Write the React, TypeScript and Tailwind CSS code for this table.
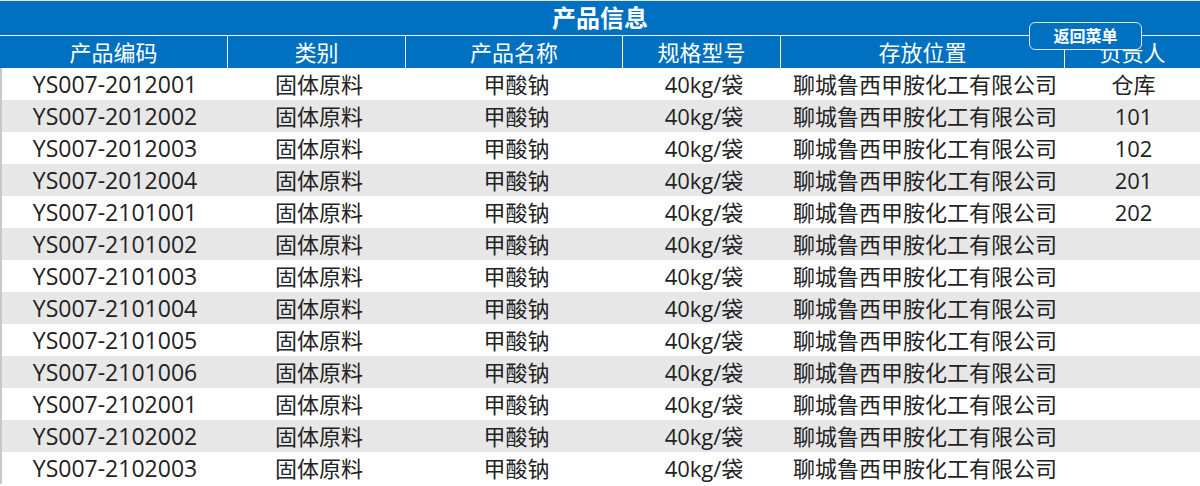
const codes = [
  "YS007-2012001",
  "YS007-2012002",
  "YS007-2012003",
  "YS007-2012004",
  "YS007-2101001",
  "YS007-2101002",
  "YS007-2101003",
  "YS007-2101004",
  "YS007-2101005",
  "YS007-2101006",
  "YS007-2102001",
  "YS007-2102002",
  "YS007-2102003",
];

const owners = ["仓库", "101", "102", "201", "202"];

const headers = ["产品编码", "类别", "产品名称", "规格型号", "存放位置", "负责人"];

const cols = "grid grid-cols-[228px_178px_217px_158px_284px_1fr]";

export default function App() {
  return (
    <div
      className="relative h-[486px] w-[1200px] overflow-hidden bg-white text-[#222]"
      style={{ fontFamily: '"Open Sans", "Noto Sans CJK SC", sans-serif' }}
    >
      <div className="flex h-[35px] items-center justify-center border-t border-[#dfe6ee] bg-[#0070c0] text-[24px] font-bold leading-none text-white">
        产品信息
      </div>
      <div className={`${cols} h-[33px] border-t border-white bg-[#0070c0] text-[22px] text-white`}>
        {headers.map((h, i) => (
          <div
            key={h}
            className={`flex items-center justify-center leading-none ${i < 5 ? "border-r border-white" : ""}`}
          >
            {h}
          </div>
        ))}
      </div>
      <div className="border-l-2 border-[#c8c8c8]">
        {codes.map((code, i) => (
          <div
            key={code}
            className={`${cols} h-[32px] text-[22px] leading-none ${i % 2 === 1 ? "bg-[#e7e7e7]" : "bg-white"}`}
          >
            <div className="flex items-center justify-center pr-[2px] text-[23px]">{code}</div>
            <div className="flex items-center justify-center">固体原料</div>
            <div className="flex items-center justify-center">甲酸钠</div>
            <div className="flex items-center justify-center">40kg/袋</div>
            <div className="flex items-center justify-center">聊城鲁西甲胺化工有限公司</div>
            <div className="flex items-center justify-center">{owners[i] ?? ""}</div>
          </div>
        ))}
      </div>
      <button className="absolute left-[1029px] top-[22px] flex h-[28px] w-[113px] items-center justify-center rounded-[6px] border-[1.5px] border-[#dbe9f6] bg-[#0070c0] text-[16px] font-bold text-white">
        返回菜单
      </button>
    </div>
  );
}
